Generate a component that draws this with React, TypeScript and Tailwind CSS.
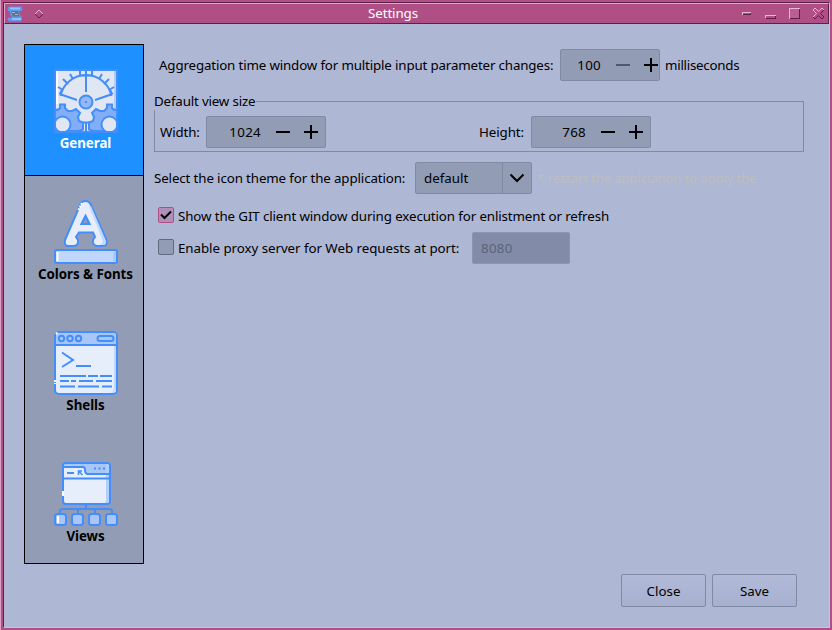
import React from "react";

const BLUE = "#438efa";

function GearsIcon() {
  return (
    <svg width="64" height="64" viewBox="0 0 64 64" fill="none" stroke={BLUE} strokeWidth="2">
      <rect x="0" y="0" width="64" height="64" fill="#e1e6f3" stroke="none" />
      <rect x="2" y="2" width="2" height="33" fill="#fff" stroke="none" />
      <rect x="60" y="2" width="2" height="40" fill="#b3cdfa" stroke="none" />
      <path d="M6.5 27A26 26 0 0 1 57.5 27" />
      <path d="M32 2v21M26 2v4.500h12V2M16 5l3 5M48 5l-3 5M9 10l5 5M55 10l-5 5M4 18l5 3M60 18l-5 3M5.500 25.500L8 21M58.500 25.500L56 21M7 25.500l16 5.500M57 25.500l-16 5.500" />
      <path d="M1 41Q5 41 6 39V35.500H11V39L14 42 18 42 22 40 26 44 24 48 25 52 29 53.500V60.500L25 62H1z" fill="#82aef8" />
      <path d="M63 41Q59 41 58 39V35.500H53V39L50 42 46 42 42 40 38 44 40 48 39 52 35 53.500V60.500L39 62H63z" fill="#82aef8" />
      <circle cx="8.500" cy="55.500" r="8" fill="#e1e6f3" />
      <circle cx="55.500" cy="55.500" r="8" fill="#e1e6f3" />
      <circle cx="32" cy="33" r="6.500" fill="#94b9f8" />
      <path d="M32 32v2M32 53v10M29 53.500h6" />
      <rect x="1" y="1" width="62" height="62" />
    </svg>
  );
}

function LetterIcon() {
  return (
    <svg width="64" height="64" viewBox="0 0 64 64" fill="none" stroke={BLUE} strokeWidth="2">
      <path d="M31.500 1Q28 1 26.500 4L11 40Q10 46 14 46H20Q25 45 24 40L22 37 25 32.500H39L41 37 39 40Q38 45 43 46H49Q54 46 52.500 40L36.500 4Q35 1 31.500 1z" fill="#e7edfa" />
      <path d="M35 6L49 41Q49 44 45 45H49Q53 44 51.500 40L37 6z" fill="#c1d6fb" stroke="none" />
      <path d="M31.500 16l-4 8h8z" fill="#929cb5" strokeWidth="2.200" />
      <path d="M28 3l-4 8" stroke="#fff" strokeDasharray="2 1" />
      <rect x="1" y="50" width="62" height="13" rx="2" fill="#c1d6fb" />
      <path d="M3.500 52v9" stroke="#fff" />
      <path d="M60.500 52v9" stroke="#a0c2fa" />
    </svg>
  );
}

function ShellIcon() {
  return (
    <svg width="64" height="64" viewBox="0 0 64 64" fill="none" stroke={BLUE} strokeWidth="2">
      <rect x="1" y="1" width="62" height="62" rx="4" fill="#e6edfb" />
      <path d="M2 14V5Q2 2 5 2H59Q62 2 62 5V14z" fill="#a9c6f9" stroke="none" />
      <path d="M60 15h2v43l-3 4h-2q3-2 3-5z" fill="#c1d6fb" stroke="none" />
      <path d="M1 14H63" />
      <circle cx="7.500" cy="7.500" r="2.700" />
      <circle cx="16" cy="7.500" r="2.700" />
      <circle cx="24.500" cy="7.500" r="2.700" />
      <rect x="43.500" y="5" width="16" height="5" rx="2.500" />
      <path d="M8 21.500l11 7.500-11 7M22 35H37" />
      <path d="M6 45H32M34 45H44M46 45H58M6 50H15M17 50H22M25 50H39M42 50H58M6 55.500H21M24 55.500H45M48 55.500H58" />
      <path d="M1 49v4M2 3l2-2" stroke="#fff" strokeDasharray="2 1" />
    </svg>
  );
}

function ViewsIcon() {
  return (
    <svg width="64" height="64" viewBox="0 0 64 64" fill="none" stroke={BLUE} strokeWidth="2">
      <rect x="9" y="1" width="47" height="41" rx="3" fill="#e6edfb" />
      <path d="M11 2H53L55 5V12H32L30 5H10z" fill="#a9c6f9" stroke="none" />
      <path d="M52 3h3v35l-2 3h-2q2-3 1-5z" fill="#b4cefa" stroke="none" />
      <path d="M9 16.500H56M10 5H29Q31 5 31 8 31 12 34 12H56" />
      <path d="M13 11h7" />
      <path d="M28 9h-3.500v4M25 9.500l3.500 3.500" strokeWidth="1.500" />
      <path d="M40 6.500h2M44.500 6.500h2M49 6.500h2" />
      <path d="M32 42V47M6 52V49Q6 47 9 47H55Q58 47 58 49V52M24 47V52M41 47V52" />
      <rect x="1" y="52" width="11" height="11" rx="2.500" fill="#a9c6f9" />
      <rect x="18" y="52" width="11" height="11" rx="2.500" fill="#a9c6f9" />
      <rect x="35" y="52" width="11" height="11" rx="2.500" fill="#a9c6f9" />
      <rect x="52" y="52" width="11" height="11" rx="2.500" fill="#a9c6f9" />
      <path d="M4 54v7M9 29v5" stroke="#fff" />
    </svg>
  );
}

function AppIcon() {
  return (
    <svg width="16" height="16" viewBox="0 0 16 16">
      <path d="M2 .5h12.500l1 2-1 2.500H12l1 4 2 2v3l-1 1.500H2L.5 13.500 1 11.500h4L3.500 9 2.500 5H1L.5 2z" fill="#5f96ee" />
      <path d="M3 1.500h10v2H3zM5 12h9v2H5z" fill="#8fc0ff" />
      <path d="M4 5h7l1.500 5.500H6z" fill="#58748f" />
      <path d="M5 6.500h3M8 8.500h3" stroke="#a5b7bd" />
    </svg>
  );
}

function TitleBar() {
  return (
    <header className="flex h-[21px] items-center border-b border-[#5b2146] border-l border-l-[#dfa6c8] border-t border-t-[#dfa6c8] border-r border-r-[#5b2146] bg-[#b04f85] pl-0.5">
      <div className="flex w-[100px] items-center gap-2.5">
        <AppIcon />
        <svg className="ml-px" width="10" height="10" viewBox="0 0 10 10" fill="none">
          <path d="M1 5L5 1L9 5" stroke="#e8b5d2" />
          <path d="M1 5L5 9L9 5" stroke="#5b2146" />
        </svg>
      </div>
      <h1 className="-mt-0.5 flex-1 text-center tracking-[-0.1px] text-white"><span className="mr-[63px]">Settings</span></h1>
      <svg className="mr-px" width="85" height="19" viewBox="742 4 85 19" fill="none" shapeRendering="crispEdges">
        <path d="M742 14.500V12.500H751" stroke="#e8b5d2" />
        <path d="M743 14.500H750.500V13" stroke="#5b2146" />
        <path d="M765.500 18V15.500H776" stroke="#e8b5d2" />
        <path d="M766 18.500H775.500V16" stroke="#5b2146" />
        <rect x="789" y="8" width="11" height="11" fill="#b95f91" />
        <path d="M789.500 19V8.500H800" stroke="#e8b5d2" />
        <path d="M790 18.500H799.500V9" stroke="#5b2146" />
        <g shapeRendering="geometricPrecision">
          <path d="M813 10l2-2 3.500 3.500L822 8l2 2M813 17l3.500-3.500L813 10" stroke="#e8b5d2" />
          <path d="M824 10l-3.500 3.500L824 17l-2 2-3.500-3.500L815 19l-2-2" stroke="#5b2146" />
        </g>
      </svg>
    </header>
  );
}

const categories = [
  { name: "General", icon: GearsIcon },
  { name: "Colors & Fonts", icon: LetterIcon },
  { name: "Shells", icon: ShellIcon },
  { name: "Views", icon: ViewsIcon },
];

function Sidebar() {
  return (
    <nav className="h-[520px] w-[120px] shrink-0 border border-black bg-[#929cb5]">
      {categories.map(({ name, icon: Icon }, index) => (
        <div
          key={name}
          className={`flex h-[131px] flex-col items-center pl-1 pt-6 font-bold ${index === 0 ? "border-b border-black bg-[#1e90ff] text-white" : "text-black"}`}
        >
          <Icon />
          <span className="mr-px mt-px whitespace-nowrap tracking-[-0.05px]">{name}</span>
        </div>
      ))}
    </nav>
  );
}

function SpinBox({ value, small = false }: { value: string; small?: boolean }) {
  return (
    <div className={`flex h-8 items-center rounded-[2px] border border-[#808aa2] bg-[#929cb5] ${small ? "w-[100px]" : "w-[120px]"}`}>
      <span className={`text-right tracking-[0.3px] ${small ? "w-10" : "w-[54px]"}`}>{value}</span>
      <svg className="ml-3.5" width="44" height="16" viewBox="0 0 44 16" stroke="black" strokeWidth="2" shapeRendering="crispEdges">
        <path d="M1 8h14" stroke={small ? "#50596a" : "black"} />
        <path d="M29 8h14M36 1v14" />
      </svg>
    </div>
  );
}

function CheckBox({ label, checked = false }: { label: string; checked?: boolean }) {
  return (
    <label className="flex items-center">
      <span className={`mr-1 flex size-4 items-center justify-center rounded-[2px] border ${checked ? "border-[#b04f85] bg-[#b090b8]" : "mb-0.5 border-[#626b7e] bg-[#929cb5]"}`}>
        {checked && (
          <svg width="12" height="12" viewBox="0 0 12 12" fill="none" stroke="black" strokeWidth="2">
            <path d="M1 5.500L4.500 9L11 2.500" />
          </svg>
        )}
      </span>
      <span className={checked ? "pt-0.5 tracking-[-0.115px]" : "tracking-[-0.05px]"}>{label}</span>
    </label>
  );
}

function Preferences() {
  return (
    <section className="ml-2.5 w-[650px] whitespace-nowrap pt-[5px]">
      <div className="flex h-8 items-center pl-[5px]">
        <span className="w-[401px] tracking-[-0.155px]">Aggregation time window for multiple input parameter changes:</span>
        <SpinBox value="100" small />
        <span className="ml-[5px] tracking-[-0.25px]">milliseconds</span>
      </div>
      <fieldset className="mt-[11px] h-[60px] border border-[#808aa2]">
        <legend className="-ml-px h-[18px] pr-px leading-[18px] tracking-[-0.17px]">Default view size</legend>
        <div className="ml-[5px] mt-1.5 flex h-8 items-center">
          <span className="w-[46px] tracking-[-0.15px]">Width:</span>
          <SpinBox value="1024" />
          <span className="ml-[153px] w-[52px] tracking-[-0.1px]">Height:</span>
          <SpinBox value="768" />
        </div>
      </fieldset>
      <div className="mt-2.5 flex h-8 items-center">
        <span className="w-[261px] tracking-[-0.125px]">Select the icon theme for the application:</span>
        <div className="flex h-8 w-[117px] rounded-[2px] border border-[#808aa2] bg-[#929cb5]">
          <span className="flex w-[87px] items-center border-r border-[#808aa2] pl-2">default</span>
          <svg className="m-auto" width="16" height="10" viewBox="0 0 16 10" fill="none" stroke="black" strokeWidth="2">
            <path d="M1.500 1.500L8 8L14.500 1.500" />
          </svg>
        </div>
        <span className="ml-[5px] tracking-[-0.2px] text-[#bebebe]">* restart the applciation to apply the</span>
      </div>
      <div className="ml-1 mt-[5px] flex h-8 items-center">
        <CheckBox label="Show the GIT client window during execution for enlistment or refresh" checked />
      </div>
      <div className="ml-1 mt-px flex h-8 items-center">
        <div className="w-[314px]"><CheckBox label="Enable proxy server for Web requests at port:" /></div>
        <div className="flex h-8 w-[98px] items-center rounded-[2px] border border-[#8995b2] bg-[#828ca9] pl-2 tracking-[0.3px] text-[#5b6479]">8080</div>
      </div>
    </section>
  );
}

export default function App() {
  return (
    <main className="h-[630px] w-[832px] overflow-hidden border-l border-[#df9fc4] bg-[#aeb7d4] font-['Noto_Sans',sans-serif] text-[13.333px] leading-[18px] text-black">
      <div className="h-[630px] border-2 border-[#b04f85]">
        <div className="h-[626px] border-b border-l border-r border-t border-b-[#d3bcd8] border-l-[#5b2146] border-r-[#d3bcd8] border-t-[#5b2146]">
          <TitleBar />
          <div className="flex pl-5 pt-5">
            <Sidebar />
            <Preferences />
          </div>
          <footer className="mt-2.5 flex justify-end gap-1.5 pr-8">
            {["Close", "Save"].map((label) => (
              <button key={label} className="h-[33px] w-[85px] rounded-[2px] border border-[#808aa2] bg-gradient-to-b from-[#b1bad7] to-[#a7b0cf]">
                {label}
              </button>
            ))}
          </footer>
        </div>
      </div>
    </main>
  );
}
